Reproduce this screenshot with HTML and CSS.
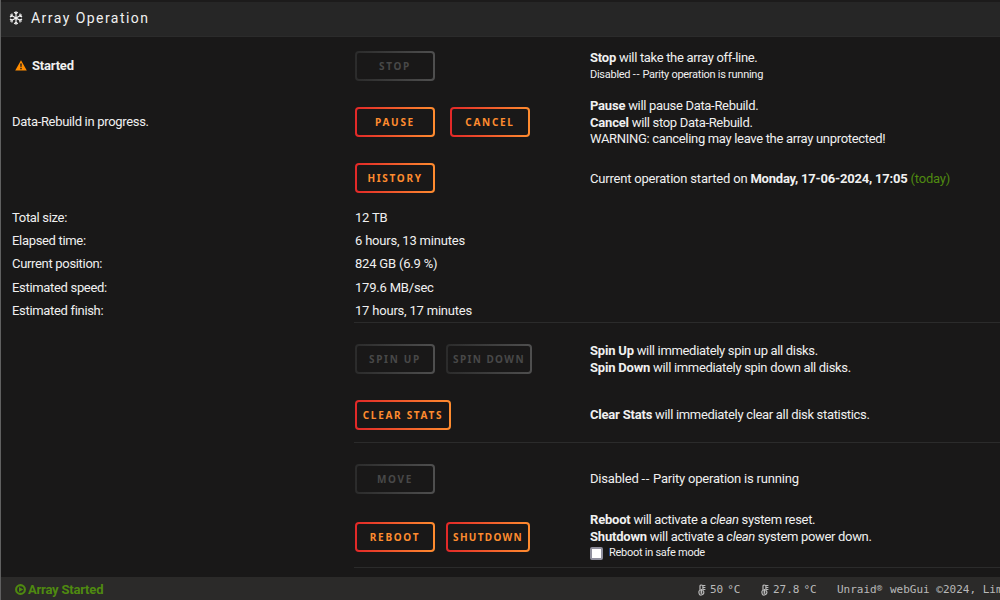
FILE: index.html
```html
<!DOCTYPE html>
<html lang="en">
<head>
	<meta charset="UTF-8">
	<title>Array Operation</title>
	<link rel="stylesheet" href="styles.css">
</head>

<body>
	<div id="main">
		<div class="title">
			<svg class="snow" viewBox="0 0 14 14" width="14" height="14">
				<path d="M7 0.3V13.7M1.2 3.7L12.8 10.3M1.2 10.3L12.8 3.7M5.2 1.2L7 3L8.8 1.2M5.2 12.8L7 11L8.8 12.8M0.9 5.9L3.3 5L2.9 2.5M13.1 8.1L10.7 9L11.1 11.5M0.9 8.1L3.3 9L2.9 11.5M13.1 5.9L10.7 5L11.1 2.5"/>
			</svg>
			<span>Array Operation</span>
		</div>

		<div class="section first">
			<div class="row stop">
				<div class="label state">
					<svg viewBox="0 0 12 11" width="12" height="11">
						<path fill="#ff8c00" d="M6 0.3L11.8 10.5H0.2Z"/>
						<path fill="#1c1b1b" d="M5.2 3.6H6.8L6.5 7.2H5.5ZM5.3 8H6.7V9.3H5.3Z"/>
					</svg>
					<b>Started</b>
				</div>
				<div class="buttons"><button disabled>Stop</button></div>
				<div class="text">
					<p><b>Stop</b> will take the array off-line.</p>
					<p class="small">Disabled <span class="dash">--</span> Parity operation is running</p>
				</div>
			</div>
			<div class="row pause">
				<div class="label">Data-Rebuild in progress.</div>
				<div class="buttons wide"><button>Pause</button><button>Cancel</button></div>
				<div class="text">
					<p><b>Pause</b> will pause Data-Rebuild.</p>
					<p><b>Cancel</b> will stop Data-Rebuild.</p>
					<p class="warning">WARNING: canceling may leave the array unprotected!</p>
				</div>
			</div>
			<div class="row history">
				<div class="label"></div>
				<div class="buttons"><button>History</button></div>
				<div class="text">
					<p class="started">Current operation started on <b>Monday, 17-06-2024, 17:05</b> <span class="green">(today)</span></p>
				</div>
			</div>
			<div class="row stat"><div class="label">Total size:</div><div class="value">12 TB</div></div>
			<div class="row stat"><div class="label">Elapsed time:</div><div class="value">6 hours, 13 minutes</div></div>
			<div class="row stat"><div class="label">Current position:</div><div class="value">824 GB (6.9 %)</div></div>
			<div class="row stat"><div class="label">Estimated speed:</div><div class="value">179.6 MB/sec</div></div>
			<div class="row stat"><div class="label">Estimated finish:</div><div class="value">17 hours, 17 minutes</div></div>
		</div>

		<div class="section disks">
			<div class="row spin">
				<div class="label"></div>
				<div class="buttons"><button disabled>Spin Up</button><button disabled class="spindown">Spin Down</button></div>
				<div class="text">
					<p><b>Spin Up</b> will immediately spin up all disks.</p>
					<p><b>Spin Down</b> will immediately spin down all disks.</p>
				</div>
			</div>
			<div class="row clear">
				<div class="label"></div>
				<div class="buttons"><button class="clearstats">Clear Stats</button></div>
				<div class="text"><p><b>Clear Stats</b> will immediately clear all disk statistics.</p></div>
			</div>
		</div>

		<div class="section system">
			<div class="row move">
				<div class="label"></div>
				<div class="buttons"><button disabled>Move</button></div>
				<div class="text"><p class="disabled">Disabled <span class="dash">--</span> Parity operation is running</p></div>
			</div>
			<div class="row reboot">
				<div class="label"></div>
				<div class="buttons"><button>Reboot</button><button class="shutdown">Shutdown</button></div>
				<div class="text">
					<p><b>Reboot</b> will activate a <em>clean</em> system reset.</p>
					<p><b>Shutdown</b> will activate a <em>clean</em> system power down.</p>
					<p class="small safe"><span class="checkbox"></span>Reboot in safe mode</p>
				</div>
			</div>
		</div>

		<div id="footer">
			<div class="green status">
				<svg viewBox="0 0 11 11" width="11" height="11">
					<circle cx="5.5" cy="5.5" r="4.4" fill="none" stroke="#4f8a10" stroke-width="2.1"/>
					<path fill="#4f8a10" d="M4 2.9L8.3 5.5L4 8.1Z"/>
				</svg>
				<b>Array Started</b>
			</div>
			<div class="temp">
				<svg viewBox="0 0 8 12" width="8" height="12">
					<path fill="none" stroke="#b9b9b9" stroke-width="1.2" d="M2 6.5V2Q2 1 3.4 1T4.9 2V6.5Q6.2 7.5 5.8 9T3.4 11T1 9T2 6.5ZM5 1.5H7.4M5 3.5H7.4M5 5.5H7.4"/>
					<path stroke="#b9b9b9" stroke-width="1.6" d="M3.4 5V9.8"/>
				</svg>
				<span>50</span><span>°C</span>
			</div>
			<div class="temp second">
				<svg viewBox="0 0 8 12" width="8" height="12">
					<path fill="none" stroke="#b9b9b9" stroke-width="1.2" d="M2 6.5V2Q2 1 3.4 1T4.9 2V6.5Q6.2 7.5 5.8 9T3.4 11T1 9T2 6.5ZM5 1.5H7.4M5 3.5H7.4M5 5.5H7.4"/>
					<path stroke="#b9b9b9" stroke-width="1.6" d="M3.4 5V9.8"/>
				</svg>
				<span>27.8</span><span>°C</span>
			</div>
			<div class="copyright">Unraid<span class="reg">®</span> webGui ©2024, Lime</div>
		</div>
	</div>
</body>
</html>
```
FILE: styles.css
```css
*
{
	margin: 0;
	padding: 0;
	box-sizing: border-box;
}
body
{
	background: #191818;
	color: #f0f0f0;
	font-family: Roboto, "Liberation Sans", sans-serif;
	font-size: 13px;
	letter-spacing: -0.32px;
	overflow: hidden;
}
b
{
	letter-spacing: -0.2px;
}
#main
{
	height: 600px;
	width: 1000px;
	border-left: 1px solid #606060;
	overflow: hidden;
}
.title
{
	display: flex;
	align-items: center;
	height: 37px;
	padding: 0 0 2px 8px;
	gap: 8px;
	background: #262626;
	border-top: 2px solid #1c1b1b;
	border-bottom: 1px solid #2b2b2b;
	font-size: 14px;
	letter-spacing: 1.45px;
}
.snow
{
	fill: none;
	stroke: #f2f2f2;
	stroke-width: 1.2;
}
.section::after
{
	content: "";
	display: block;
	height: 1px;
	margin-left: 353px;
	background: #2b2b2b;
}
.row
{
	display: grid;
	grid-template-columns: 343px 235px 1fr;
	align-items: center;
	padding-left: 11px;
	white-space: nowrap;
}
.stop
{
	height: 57px;
}
.pause, .history
{
	height: 56px;
}
.pause .label
{
	padding-bottom: 2px;
}
.stat
{
	height: 23.2px;
}
.value
{
	letter-spacing: -0.2px;
}
.first
{
	height: 286px;
}
.spin, .move
{
	height: 57px;
}
.disks, .system
{
	padding-top: 7px;
}
.clear
{
	height: 55px;
}
.reboot
{
	height: 60px;
}
.state
{
	display: flex;
	align-items: center;
	padding-left: 3px;
	gap: 5px;
}
.text
{
	padding-top: 2px;
}
.text p
{
	line-height: 16.5px;
}
.started
{
	letter-spacing: -0.2px;
}
.disabled
{
	letter-spacing: -0.2px;
}
.dash
{
	letter-spacing: 0.6px;
}
.reboot .text
{
	padding-top: 0;
}
.text .small
{
	font-size: 11px;
	letter-spacing: -0.27px;
}
.green
{
	color: #4f8a10;
}
.buttons
{
	display: flex;
	gap: 11px;
}
.wide
{
	gap: 15px;
}
button
{
	width: 80px;
	height: 30px;
	border: 2px solid transparent;
	border-radius: 4px;
	background: linear-gradient(#191818, #191818) padding-box, linear-gradient(90deg, #e22828, #ff8c2f) border-box;
	color: #ff8c2f;
	font-family: "Noto Sans", "Liberation Sans", sans-serif;
	font-size: 10px;
	font-weight: bold;
	letter-spacing: 1.7px;
	text-transform: uppercase;
	white-space: nowrap;
}
button:disabled
{
	background: linear-gradient(#191818, #191818) padding-box, linear-gradient(90deg, #2b2b2b, #4f4f4f) border-box;
	color: #484848;
}
.spindown
{
	width: 86px;
	letter-spacing: 1.4px;
}
.clearstats
{
	width: 96px;
}
.shutdown
{
	width: 84px;
	letter-spacing: 1.3px;
}
.safe
{
	display: flex;
	align-items: center;
	gap: 6px;
}
.checkbox
{
	width: 13px;
	height: 13px;
	border: 2px solid #8f8f9d;
	border-radius: 2px;
	background: #fff;
}
#footer
{
	display: flex;
	align-items: center;
	height: 24px;
	margin-top: 9px;
	padding: 1px 0 0 14px;
	background: #2b2a29;
	color: #b9b9b9;
	font-family: "DejaVu Sans Mono", monospace;
	font-size: 11px;
	letter-spacing: 0;
	white-space: nowrap;
}
.status
{
	display: flex;
	align-items: center;
	flex: none;
	gap: 2px;
	width: 683px;
	font-family: Roboto, "Liberation Sans", sans-serif;
	font-size: 13px;
}
.temp
{
	display: flex;
	align-items: center;
	flex: none;
	gap: 4px;
	width: 63px;
}
.second
{
	width: 76px;
}
.reg
{
	display: inline-block;
	width: 6.6px;
	font-size: 9px;
	line-height: 9px;
	vertical-align: 2px;
}
```
